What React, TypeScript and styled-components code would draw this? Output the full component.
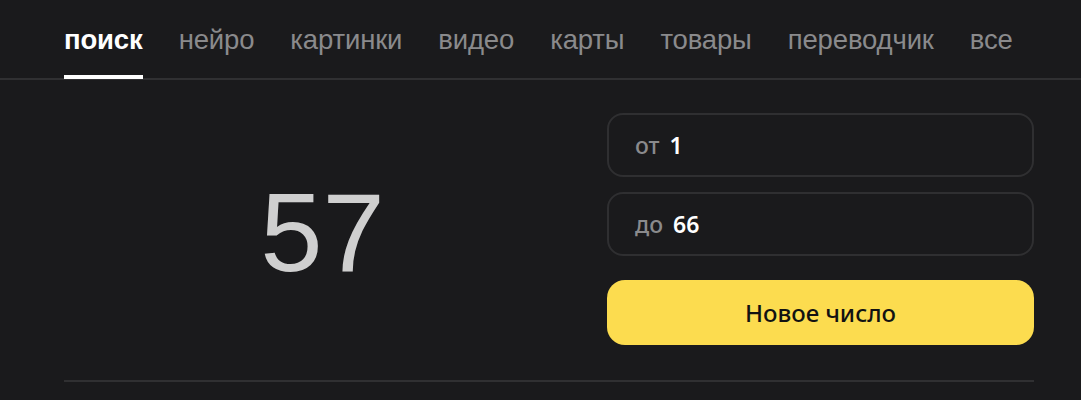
import React from "react";
import styled, { createGlobalStyle } from "styled-components";

const GlobalStyle = createGlobalStyle`
  html, body {
    margin: 0;
    padding: 0;
    background: #1a1a1c;
  }
  body {
    font-family: "Liberation Sans", Arial, sans-serif;
    color: #ffffff;
  }
`;

const Page = styled.div`
  width: 1081px;
  min-height: 400px;
  background: #1a1a1c;
  overflow: hidden;
`;

const Header = styled.nav`
  height: 80px;
  border-bottom: 2px solid #303032;
  box-sizing: border-box;
  padding: 0 64px;
  display: flex;
  gap: 36px;
`;

const Tab = styled.a<{ $active?: boolean }>`
  position: relative;
  display: flex;
  align-items: center;
  padding-top: 1px;
  font-size: 27.5px;
  letter-spacing: -0.15px;
  font-weight: ${(p) => (p.$active ? 700 : 400)};
  color: ${(p) => (p.$active ? "#ffffff" : "#8a8a8c")};
  text-decoration: none;
  white-space: nowrap;

  &::after {
    content: "";
    position: absolute;
    left: 0;
    right: 0;
    bottom: -1px;
    height: 4px;
    background: #ffffff;
    display: ${(p) => (p.$active ? "block" : "none")};
  }
`;

const Main = styled.main`
  margin: 0 47px 0 64px;
  padding: 33px 0 35px;
  border-bottom: 2px solid #303032;
  display: grid;
  grid-template-columns: 1fr 427px;
  gap: 24px;
`;

const Result = styled.div`
  display: flex;
  align-items: center;
  justify-content: center;
  padding-top: 8px;
  padding-right: 2px;
  font-size: 112px;
  font-weight: 400;
  color: #cfcfcf;
  line-height: 1;
`;

const Controls = styled.div`
  display: flex;
  flex-direction: column;
  gap: 15px;
`;

const Field = styled.label`
  height: 64px;
  box-sizing: border-box;
  border: 2px solid #2f2f31;
  border-radius: 16px;
  display: flex;
  align-items: center;
  padding: 0 26px;
  gap: 10px;
  font-family: "Noto Sans", "Open Sans", sans-serif;
  font-size: 23px;
`;

const FieldLabel = styled.span`
  color: #8a8a8c;
  font-weight: 500;
`;

const FieldValue = styled.span`
  color: #ffffff;
  font-weight: 600;
`;

const Button = styled.button`
  margin-top: 9px;
  height: 65px;
  border: none;
  border-radius: 18px;
  background: #fcdc4f;
  color: #121212;
  font-family: "Noto Sans", "Open Sans", sans-serif;
  font-size: 24px;
  font-weight: 500;
  cursor: pointer;
`;

const tabs = [
  "поиск",
  "нейро",
  "картинки",
  "видео",
  "карты",
  "товары",
  "переводчик",
  "все",
];

export default function App() {
  return (
    <Page>
      <GlobalStyle />
      <Header>
        {tabs.map((t, i) => (
          <Tab key={t} $active={i === 0} href="#">
            {t}
          </Tab>
        ))}
      </Header>
      <Main>
        <Result>57</Result>
        <Controls>
          <Field>
            <FieldLabel>от</FieldLabel>
            <FieldValue>1</FieldValue>
          </Field>
          <Field>
            <FieldLabel>до</FieldLabel>
            <FieldValue>66</FieldValue>
          </Field>
          <Button>Новое число</Button>
        </Controls>
      </Main>
    </Page>
  );
}
